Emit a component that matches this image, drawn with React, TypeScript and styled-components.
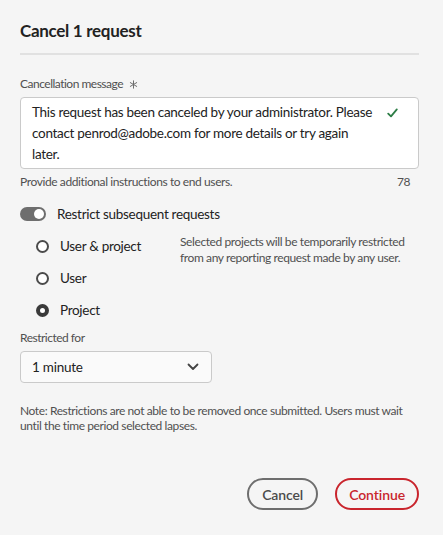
import { useState } from "react";
import styled, { createGlobalStyle } from "styled-components";

const GlobalStyle = createGlobalStyle`
  html, body {
    margin: 0;
    padding: 0;
    background: #f5f5f5;
  }
  body {
    font-family: Lato, "Noto Sans", sans-serif;
    color: #222;
  }
`;

const options = ["User & project", "User", "Project"];

const App = () => {
  const [selected, setSelected] = useState("Project");
  const message =
    "This request has been canceled by your administrator. Please contact penrod@adobe.com for more details or try again later.";

  return (
    <>
      <GlobalStyle />
      <DialogSt>
        <TitleSt>Cancel 1 request</TitleSt>
        <DividerSt />

        <LabelSt>
          Cancellation message
          <svg width="9" height="9" viewBox="0 0 9 9">
            <path
              d="M4.5 0.8 V8.2 M1.3 2.6 L7.7 6.4 M1.3 6.4 L7.7 2.6"
              stroke="#6e6e6e"
              strokeWidth="1"
              strokeLinecap="round"
            />
          </svg>
        </LabelSt>
        <TextAreaSt>
          <MessageSt>{message}</MessageSt>
          <svg width="11" height="10" viewBox="0 0 11 10">
            <path
              d="M1.2 5.6 L4 8.4 L9.8 1.4"
              fill="none"
              stroke="#2d7d46"
              strokeWidth="1.8"
              strokeLinecap="round"
              strokeLinejoin="round"
            />
          </svg>
        </TextAreaSt>
        <HelpRowSt>
          <span>Provide additional instructions to end users.</span>
          <span>78</span>
        </HelpRowSt>

        <SwitchRowSt>
          <SwitchSt $on>
            <KnobSt />
          </SwitchSt>
          <span>Restrict subsequent requests</span>
        </SwitchRowSt>

        <RadioBlockSt>
          <RadioListSt>
            {options.map((o) => (
              <RadioRowSt key={o} onClick={() => setSelected(o)}>
                <RadioSt $checked={selected === o} />
                <span>{o}</span>
              </RadioRowSt>
            ))}
          </RadioListSt>
          <DescSt>
            Selected projects will be temporarily restricted from any reporting
            request made by any user.
          </DescSt>
        </RadioBlockSt>

        <LabelSt $top={4}>Restricted for</LabelSt>
        <SelectSt>
          <span>1 minute</span>
          <svg width="12" height="8" viewBox="0 0 12 8">
            <path
              d="M1.5 1.5 L6 6 L10.5 1.5"
              fill="none"
              stroke="#444"
              strokeWidth="1.8"
              strokeLinecap="round"
              strokeLinejoin="round"
            />
          </svg>
        </SelectSt>

        <NoteSt>
          Note: Restrictions are not able to be removed once submitted. Users
          must wait until the time period selected lapses.
        </NoteSt>

        <FooterSt>
          <ButtonSt>Cancel</ButtonSt>
          <ButtonSt $accent>Continue</ButtonSt>
        </FooterSt>
      </DialogSt>
    </>
  );
};

export default App;

const DialogSt = styled.div`
  box-sizing: border-box;
  width: 443px;
  height: 535px;
  padding: 20px 24px 0 20px;
  display: flex;
  flex-direction: column;
`;

const TitleSt = styled.h1`
  margin: 0;
  font-size: 17px;
  line-height: 22px;
  letter-spacing: -0.3px;
  font-weight: 700;
  color: #222;
`;

const DividerSt = styled.div`
  height: 2px;
  background: #e1e1e1;
  margin: 11px 0 21px;
`;

const LabelSt = styled.div<{ $top?: number }>`
  display: flex;
  align-items: center;
  gap: 6px;
  font-size: 12px;
  line-height: 16px;
  letter-spacing: -0.5px;
  color: #505050;
  margin-top: ${(p) => p.$top ?? 0}px;
  margin-bottom: 5px;
`;

const TextAreaSt = styled.div`
  box-sizing: border-box;
  height: 72px;
  background: #fff;
  border: 1px solid #cacaca;
  border-radius: 4px;
  padding: 4px 20px 0 11px;
  display: flex;
  align-items: flex-start;
  justify-content: space-between;

  svg {
    flex: none;
    margin-top: 6px;
  }
`;

const MessageSt = styled.div`
  width: 344px;
  font-size: 13.5px;
  line-height: 21px;
  letter-spacing: -0.3px;
  color: #222;
`;

const HelpRowSt = styled.div`
  display: flex;
  justify-content: space-between;
  font-size: 12px;
  line-height: 16px;
  letter-spacing: -0.4px;
  color: #505050;
  padding: 5px 9px 0 0;
`;

const SwitchRowSt = styled.div`
  display: flex;
  align-items: center;
  gap: 11px;
  height: 20px;
  margin-top: 14px;
  font-size: 13.5px;
  letter-spacing: -0.3px;
  color: #222;
`;

const SwitchSt = styled.div<{ $on?: boolean }>`
  box-sizing: border-box;
  width: 26px;
  height: 14px;
  border-radius: 7px;
  background: ${(p) => (p.$on ? "#6e6e6e" : "#ccc")};
  display: flex;
  align-items: center;
  justify-content: ${(p) => (p.$on ? "flex-end" : "flex-start")};
  padding: 0 2px;
`;

const KnobSt = styled.div`
  width: 10px;
  height: 10px;
  border-radius: 50%;
  background: #fff;
`;

const RadioBlockSt = styled.div`
  display: flex;
  gap: 20px;
  margin-top: 6px;
  padding-left: 16px;
`;

const RadioListSt = styled.div`
  display: flex;
  flex-direction: column;
  width: 124px;
`;

const RadioRowSt = styled.label`
  display: flex;
  align-items: center;
  gap: 11px;
  height: 32px;
  font-size: 13.5px;
  letter-spacing: -0.3px;
  color: #222;
  cursor: pointer;
`;

const RadioSt = styled.span<{ $checked?: boolean }>`
  box-sizing: border-box;
  width: 13px;
  height: 13px;
  border-radius: 50%;
  background: #fff;
  border: ${(p) => (p.$checked ? "4px solid #3a3a3a" : "2px solid #4b4b4b")};
`;

const DescSt = styled.div`
  font-size: 12px;
  line-height: 16px;
  letter-spacing: -0.4px;
  color: #505050;
  padding-top: 4px;
  width: 235px;
`;

const SelectSt = styled.div`
  box-sizing: border-box;
  width: 192px;
  height: 32px;
  background: #fafafa;
  border: 1px solid #cacaca;
  border-radius: 4px;
  display: flex;
  align-items: center;
  justify-content: space-between;
  padding: 0 12px 0 11px;
  font-size: 13.5px;
  letter-spacing: -0.25px;
  color: #222;
`;

const NoteSt = styled.p`
  margin: 20px 0 0;
  font-size: 12px;
  line-height: 15px;
  letter-spacing: -0.4px;
  color: #505050;
`;

const FooterSt = styled.div`
  margin-top: auto;
  margin-bottom: 25px;
  display: flex;
  justify-content: flex-end;
  gap: 17px;
`;

const ButtonSt = styled.button<{ $accent?: boolean }>`
  box-sizing: border-box;
  min-width: 71px;
  height: 32px;
  padding: 0 12px;
  border-radius: 16px;
  background: transparent;
  border: 2px solid ${(p) => (p.$accent ? "#c9252d" : "#6e6e6e")};
  color: ${(p) => (p.$accent ? "#c9252d" : "#4b4b4b")};
  font-family: inherit;
  font-size: 14px;
  letter-spacing: -0.1px;
  font-weight: 600;
`;
